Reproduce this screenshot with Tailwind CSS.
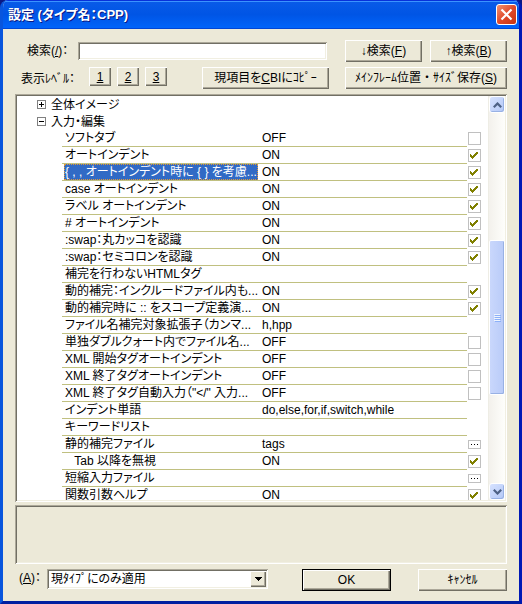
<!DOCTYPE html>
<html lang="ja">
<head>
  <meta charset="UTF-8">
  <meta name="viewport" content="width=device-width, initial-scale=1.0">
  <title>設定 (タイプ名：CPP)</title>
  <script src="https://cdn.jsdelivr.net/npm/@tailwindcss/browser@4"></script>
</head>
<body class="h-screen bg-[#0a1883]">
  <div class="flex h-full flex-col overflow-hidden rounded-t-lg border-x-3 border-b-3 border-t-0 border-l-[#0855dd] border-r-[#0019b5] border-b-[#001ea0] bg-[#ece9d8] font-['Liberation_Sans','Noto_Sans_CJK_JP',sans-serif] text-xs leading-4 text-black [font-feature-settings:'palt']">
    <header class="-mx-[3px] flex h-[29px] shrink-0 items-center justify-between bg-linear-to-b from-[#0a5be8] via-[#0055e5] to-[#0065fc] pr-[5px] pl-2 shadow-[inset_0_1px_#0831d9,inset_0_2px_#3a93ff,inset_0_-1px_#0046d5]">
      <h1 class="text-[13px] leading-4 font-bold text-white [text-shadow:1px_1px_#0a1883]">設定 (タイプ名：CPP)</h1>
      <button aria-label="閉じる" class="grid size-[21px] place-items-center rounded-[3px] border border-white bg-linear-to-br from-[#f0906f] via-[#e0492a] to-[#c8330c]">
        <svg class="size-[13px]" viewBox="0 0 13 13" fill="none" stroke="#fff" stroke-width="2.2"><path d="M1.5 1.5l10 10M11.5 1.5l-10 10"/></svg>
      </button>
    </header>

    <main class="flex min-h-0 flex-1 flex-col px-3 pt-[11px] pb-[10px]">
      <div class="mb-[5px] flex h-[22px] items-center">
        <label for="search" class="w-[63px] pl-3 whitespace-nowrap">検索(<u>/</u>)：</label>
        <input id="search" type="text" class="h-[18px] min-w-0 flex-1 bg-white px-1 shadow-[inset_1px_1px_#aca899,inset_-1px_-1px_#fff,inset_2px_2px_#716f64,inset_-2px_-2px_#f1efe2] outline-none">
        <div class="ml-[18px] flex w-[162px] gap-2">
          <button class="h-[22px] flex-1 shadow-[inset_1px_1px_#fff,inset_-1px_-1px_#716f64,inset_-2px_-2px_#aca899]">↓検索(<u>F</u>)</button>
          <button class="h-[22px] flex-1 shadow-[inset_1px_1px_#fff,inset_-1px_-1px_#716f64,inset_-2px_-2px_#aca899]">↑検索(<u>B</u>)</button>
        </div>
      </div>
      <div class="mb-[5px] flex h-[22px]">
        <span class="w-[74px] pt-1 pl-[6px] whitespace-nowrap">表示ﾚﾍﾞﾙ：</span>
        <div class="flex gap-[6px]">
          <button class="h-[19px] w-[22px] shadow-[inset_1px_1px_#fff,inset_-1px_-1px_#716f64,inset_-2px_-2px_#aca899]"><u>1</u></button>
          <button class="h-[19px] w-[22px] shadow-[inset_1px_1px_#fff,inset_-1px_-1px_#716f64,inset_-2px_-2px_#aca899]"><u>2</u></button>
          <button class="h-[19px] w-[22px] shadow-[inset_1px_1px_#fff,inset_-1px_-1px_#716f64,inset_-2px_-2px_#aca899]"><u>3</u></button>
        </div>
        <button class="ml-auto h-[22px] w-[127px] shadow-[inset_1px_1px_#fff,inset_-1px_-1px_#716f64,inset_-2px_-2px_#aca899]">現項目を<u>C</u>BIにｺﾋﾟｰ</button>
        <button class="ml-4 h-[22px] w-[162px] whitespace-nowrap shadow-[inset_1px_1px_#fff,inset_-1px_-1px_#716f64,inset_-2px_-2px_#aca899] [font-feature-settings:normal]">ﾒｲﾝﾌﾚｰﾑ位置・ｻｲｽﾞ保存(<u>S</u>)</button>
      </div>

      <div class="flex min-h-0 flex-1 bg-white p-[2px] shadow-[inset_1px_1px_#aca899,inset_-1px_-1px_#fff,inset_2px_2px_#716f64,inset_-2px_-2px_#f1efe2]">
        <div class="min-w-0 flex-1 overflow-hidden">
          <table class="w-full table-fixed border-separate border-spacing-0">
            <colgroup>
              <col class="w-[45px]"><col class="w-[198px]"><col><col class="w-[21px]">
            </colgroup>
            <tbody id="rows"></tbody>
          </table>
        </div>
        <div class="flex w-[17px] shrink-0 flex-col border-l border-[#eeede5] bg-linear-to-r from-[#f3f1ec] to-[#fefefb]">
          <button aria-label="上へ" class="grid h-[17px] shrink-0 place-items-center rounded-[3px] border border-white bg-linear-to-br from-[#d6e2ff] to-[#b4c8f6] shadow-[inset_-1px_-1px_#98b1e4]">
            <svg class="h-[6px] w-[9px]" viewBox="0 0 9 6" fill="none" stroke="#4d6185" stroke-width="2.2"><path d="M.8 5.2l3.7-3.7 3.7 3.7"/></svg>
          </button>
          <div class="grow-128 basis-0"></div>
          <div class="grid grow-154 basis-0 place-items-center rounded-[2px] border border-white bg-linear-to-r from-[#c9d7fc] to-[#b9cbf8] shadow-[inset_-1px_-1px_#98b1e4]">
            <svg class="h-2 w-[7px]" viewBox="0 0 7 8" shape-rendering="crispEdges"><path d="M0 0h6v1H0zM0 2h6v1H0zM0 4h6v1H0zM0 6h6v1H0z" fill="#eef4fe"/><path d="M1 1h6v1H1zM1 3h6v1H1zM1 5h6v1H1zM1 7h6v1H1z" fill="#8cb0f8"/></svg>
          </div>
          <div class="grow-88 basis-0"></div>
          <button aria-label="下へ" class="grid h-[17px] shrink-0 place-items-center rounded-[3px] border border-white bg-linear-to-br from-[#d6e2ff] to-[#b4c8f6] shadow-[inset_-1px_-1px_#98b1e4]">
            <svg class="h-[6px] w-[9px]" viewBox="0 0 9 6" fill="none" stroke="#4d6185" stroke-width="2.2"><path d="M.8.8l3.7 3.7L8.2.8"/></svg>
          </button>
        </div>
      </div>

      <div class="mt-[3px] h-[59px] shrink-0 shadow-[inset_1px_1px_#aca899,inset_-1px_-1px_#fff,inset_2px_2px_#716f64,inset_-2px_-2px_#f1efe2]"></div>

      <div class="mt-[5px] flex h-[22px] shrink-0 items-start">
        <label for="apply" class="w-8 pt-px pl-1 whitespace-nowrap">(<u>A</u>)：</label>
        <div class="grid h-5 min-w-0 flex-1 bg-white p-[2px] shadow-[inset_1px_1px_#aca899,inset_-1px_-1px_#fff,inset_2px_2px_#716f64,inset_-2px_-2px_#f1efe2]">
          <select id="apply" class="col-start-1 row-start-1 h-4 w-full appearance-none pl-[2px] outline-none">
            <option>現ﾀｲﾌﾟにのみ適用</option>
          </select>
          <span class="pointer-events-none col-start-1 row-start-1 grid h-4 w-4 place-items-center justify-self-end bg-[#ece9d8] shadow-[inset_1px_1px_#fff,inset_-1px_-1px_#716f64,inset_-2px_-2px_#aca899]">
            <svg class="h-1 w-[7px]" viewBox="0 0 7 4" shape-rendering="crispEdges"><path d="M0 0h7v1H6v1H5v1H4v1H3V3H2V2H1V1H0z"/></svg>
          </span>
        </div>
        <button class="ml-[34px] h-[22px] w-[89px] border border-black shadow-[inset_1px_1px_#fff,inset_-1px_-1px_#716f64,inset_-2px_-2px_#aca899]">OK</button>
        <button class="ml-[27px] h-[22px] w-[89px] shadow-[inset_1px_1px_#fff,inset_-1px_-1px_#716f64,inset_-2px_-2px_#aca899] [font-feature-settings:normal]">ｷｬﾝｾﾙ</button>
      </div>
    </main>
  </div>

  <script>
    // control: 'on' / 'off' = tick box, 'more' = browse button
    const groups = [['全体イメージ', false], ['入力・編集', true]];
    const items = [
      ['ソフトタブ', 'OFF', 'off'],
      ['オートインデント', 'ON', 'on'],
      ['{ , , オートインデント時に { } を考慮...', 'ON', 'on'],
      ['case オートインデント', 'ON', 'on'],
      ['ラベル オートインデント', 'ON', 'on'],
      ['# オートインデント', 'ON', 'on'],
      [':swap：丸カッコを認識', 'ON', 'on'],
      [':swap：セミコロンを認識', 'ON', 'on'],
      ['補完を行わないHTMLタグ', '', ''],
      ['動的補完：インクルードファイル内も...', 'ON', 'on'],
      ['動的補完時に :: をスコープ定義演...', 'ON', 'on'],
      ['ファイル名補完対象拡張子（カンマ...', 'h,hpp', ''],
      ['単独ダブルクォート内でファイル名...', 'OFF', 'off'],
      ['XML 開始タグオートインデント', 'OFF', 'off'],
      ['XML 終了タグオートインデント', 'OFF', 'off'],
      ['XML 終了タグ自動入力（"&lt;/" 入力...', 'OFF', 'off'],
      ['インデント単語', 'do,else,for,if,switch,while', ''],
      ['キーワードリスト', '', ''],
      ['静的補完ファイル', 'tags', 'more'],
      ['&ensp;&nbsp;Tab 以降を無視', 'ON', 'on'],
      ['短縮入力ファイル', '', 'more'],
      ['関数引数ヘルプ', 'ON', 'on'],
    ];
    const selected = 2;

    function control(kind, i) {
      if (kind === 'more') {
        return `<button aria-label="参照" class="ml-px flex h-[9px] w-[13px] items-center justify-center border border-[#c0c0c0] bg-white">
          <svg class="h-px w-[7px]" viewBox="0 0 7 1" shape-rendering="crispEdges"><path d="M0 0h1v1H0zM3 0h1v1H3zM6 0h1v1H6z"/></svg></button>`;
      }
      if (kind === '') return '';
      return `<span class="ml-px grid size-[13px] place-items-center">
        <input type="checkbox" aria-labelledby="item${i}" ${kind === 'on' ? 'checked' : ''} class="peer col-start-1 row-start-1 size-[13px] appearance-none border border-[#c0c0c0] bg-white">
        <svg class="pointer-events-none invisible col-start-1 row-start-1 h-[7px] w-2 peer-checked:visible" viewBox="0 0 8 7" shape-rendering="crispEdges"><path d="M0 2h1v1h1v1h1V3h1V2h1V1h1V0h2v2H7v1H6v1H5v1H4v1H3v1H2V6H1V5H0z" fill="#808000"/></svg>
      </span>`;
    }

    let html = '';
    groups.forEach(([name, open]) => {
      html += `<tr><td colspan="4" class="h-[17px] p-0"><div class="flex h-[17px] items-center gap-[5px] pl-5">
        <button aria-expanded="${open}" aria-label="${name}" class="grid size-[9px] place-items-center border border-[#808080]">
          <svg class="size-[5px]" viewBox="0 0 5 5" shape-rendering="crispEdges"><path d="${open ? 'M0 2h5v1H0z' : 'M0 2h5v1H0zM2 0h1v5H2z'}"/></svg>
        </button>
        <span>${name}</span></div></td></tr>`;
    });
    items.forEach(([name, value, kind], i) => {
      const look = i === selected
        ? 'mx-[2px] h-4 overflow-hidden bg-[#316ac5] pl-px whitespace-nowrap text-white outline-1 -outline-offset-1 outline-dotted outline-[#e09838]'
        : 'h-4 overflow-hidden pl-[3px] whitespace-nowrap';
      html += `<tr><td class="p-0"></td>
        <td class="h-[17px] border-b border-[#c0c080] p-0"><div id="item${i}" class="${look}">${name}</div></td>
        <td class="h-[17px] border-b border-[#c0c080] p-0"><div class="h-4 overflow-hidden pl-[2px] whitespace-nowrap">${value}</div></td>
        <td class="h-[17px] p-0 align-middle">${control(kind, i)}</td></tr>`;
    });
    document.getElementById('rows').innerHTML = html;
  </script>
</body>
</html>
